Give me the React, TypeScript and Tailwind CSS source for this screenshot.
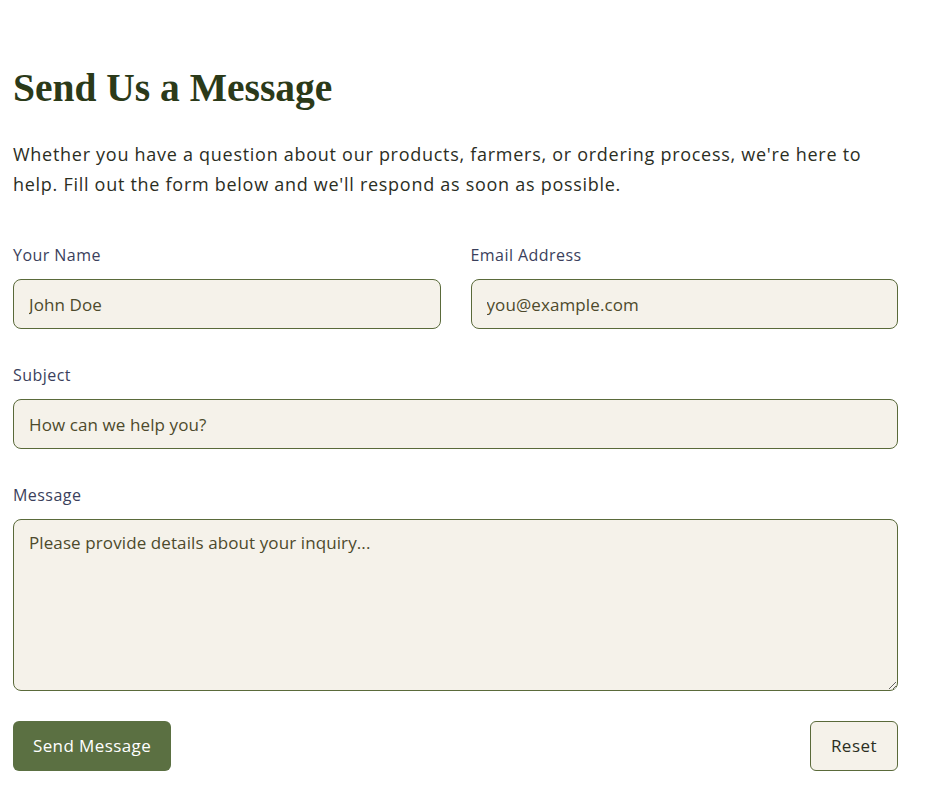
import React from "react";

export default function App() {
  const body = { fontFamily: '"Open Sans", "Noto Sans", sans-serif' };
  const inputCls =
    "mt-[12px] h-[50px] rounded-[8px] border border-[#5a6a3a] bg-[#f5f2ea] px-[15px] text-[17px] tracking-[0.1px] text-[#3a3a20] placeholder:text-[#4d4a2c] outline-none";
  const labelCls = "text-[16px] leading-[24px] tracking-[0.45px] text-[#3b3f5c]";
  return (
    <div className="min-h-screen bg-white" style={body}>
      <div className="w-[885px] ml-[13px] pt-[60px]">
        <h2
          className="text-[39.5px] leading-[56px] font-bold text-[#2b3a19]"
          style={{ fontFamily: '"Liberation Serif", "DejaVu Serif", serif' }}
        >
          Send Us a Message
        </h2>
        <p className="mt-[23px] text-[18px] leading-[30px] tracking-[0.72px] text-[#2b2e1f]">
          Whether you have a question about our products, farmers, or ordering process, we're here to help. Fill out the form below and we'll respond as soon as possible.
        </p>
        <form className="mt-[44px] flex flex-col">
          <div className="grid grid-cols-2 gap-[30px]">
            <div className="flex flex-col">
              <label className={labelCls}>Your Name</label>
              <input placeholder="John Doe" className={inputCls} />
            </div>
            <div className="flex flex-col">
              <label className={labelCls}>Email Address</label>
              <input placeholder="you@example.com" className={inputCls} />
            </div>
          </div>
          <div className="mt-[34px] flex flex-col">
            <label className={labelCls}>Subject</label>
            <input placeholder="How can we help you?" className={inputCls} />
          </div>
          <div className="mt-[34px] flex flex-col">
            <label className={labelCls}>Message</label>
            <textarea
              placeholder="Please provide details about your inquiry..."
              className="mt-[12px] block h-[172px] rounded-[8px] border border-[#5a6a3a] bg-[#f5f2ea] px-[15px] py-[10px] text-[17px] leading-[26px] tracking-[0.1px] text-[#3a3a20] placeholder:text-[#4d4a2c] outline-none"
            />
          </div>
          <div className="mt-[30px] flex items-center justify-between">
            <button
              type="button"
              className="h-[50px] w-[158px] rounded-[6px] bg-[#5b7042] text-[17px] tracking-[0.4px] text-white"
            >
              Send Message
            </button>
            <button
              type="button"
              className="h-[50px] w-[88px] rounded-[6px] border border-[#5a6a3a] bg-[#f5f2ea] text-[17px] tracking-[0.5px] text-[#2b2e1f]"
            >
              Reset
            </button>
          </div>
        </form>
      </div>
    </div>
  );
}
